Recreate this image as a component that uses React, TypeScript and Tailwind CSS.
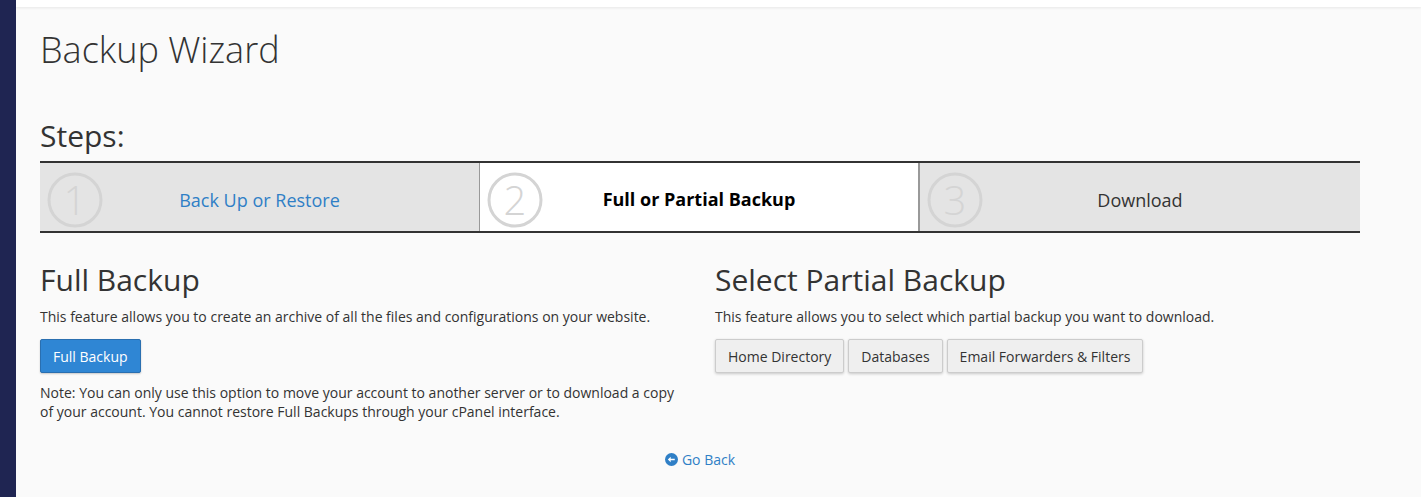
import React from "react";

function Num({ n }: { n: string }) {
  return (
    <svg width="58" height="58" viewBox="0 0 58 58" className="absolute left-[6px] top-[8px]">
      <circle cx="29" cy="29" r="26" fill="none" stroke="#d4d4d4" strokeWidth="3" />
      <text x="29" y="44" textAnchor="middle" fontSize="40" fontWeight="300" fill="#d4d4d4" fontFamily="Open Sans, sans-serif">{n}</text>
    </svg>
  );
}

export default function App() {
  const f = { fontFamily: '"Open Sans", "Liberation Sans", sans-serif' };
  return (
    <div style={f} className="flex h-[497px] w-[1421px] bg-[#fafafa] text-[#333]">
      <div className="w-[16px] shrink-0 bg-[#1f2552]" />
      <div className="flex-1 flex flex-col">
        <div className="h-[7px] bg-white shadow-[0_1px_3px_rgba(0,0,0,0.08)]" />
        <div className="pl-[24px] pr-[61px]">
          <h1 className="mt-[23px] text-[36px] font-light leading-[40px] text-[#333]">Backup Wizard</h1>
          <h2 className="mt-[49px] text-[30px] leading-[34px]">Steps:</h2>
          <div className="mt-[8px] grid grid-cols-3 border-y-2 border-[#333] h-[72px]">
            <div className="relative bg-[#e4e4e4] flex items-center justify-center border-r border-[#999]">
              <Num n="1" />
              <span className="text-[18px] text-[#2f7fc6] pt-[6px]">Back Up or Restore</span>
            </div>
            <div className="relative bg-white flex items-center justify-center border-r-2 border-[#999]">
              <Num n="2" />
              <span className="text-[18px] font-bold text-black pt-[4px]">Full or Partial Backup</span>
            </div>
            <div className="relative bg-[#e4e4e4] flex items-center justify-center">
              <Num n="3" />
              <span className="text-[18px] text-[#333] pt-[6px]">Download</span>
            </div>
          </div>
          <div className="grid grid-cols-[675px_1fr] mt-[30px]">
            <div>
              <h3 className="text-[30px] leading-[34px]">Full Backup</h3>
              <p className="mt-[9px] text-[14px]">This feature allows you to create an archive of all the files and configurations on your website.</p>
              <button className="mt-[12px] h-[34px] px-[12px] text-[14px] text-white bg-[#2f86d4] border border-[#2a6fb0] rounded-[2px] shadow-[0_1px_2px_rgba(0,0,0,0.2)]">Full Backup</button>
              <p className="mt-[10px] text-[14px] leading-[19px] w-[645px]">Note: You can only use this option to move your account to another server or to download a copy of your account. You cannot restore Full Backups through your cPanel interface.</p>
            </div>
            <div>
              <h3 className="text-[30px] leading-[34px]">Select Partial Backup</h3>
              <p className="mt-[9px] text-[14px]">This feature allows you to select which partial backup you want to download.</p>
              <div className="mt-[12px] flex gap-[4px]">
                {["Home Directory", "Databases", "Email Forwarders & Filters"].map((t) => (
                  <button key={t} className="h-[34px] px-[12px] text-[14px] bg-[#efefef] border border-[#ccc] rounded-[2px] shadow-[0_1px_3px_rgba(0,0,0,0.2)]">{t}</button>
                ))}
              </div>
            </div>
          </div>
          <div className="mt-[28px] flex justify-center">
            <a className="flex items-center gap-[4px] text-[14px] text-[#2f7fc6]">
              <svg width="13" height="13" viewBox="0 0 16 16">
                <circle cx="8" cy="8" r="8" fill="#2f7fc6" />
                <path d="M12 7H7V4.5L3.5 8 7 11.5V9h5z" fill="white" />
              </svg>
              Go Back
            </a>
          </div>
        </div>
      </div>
    </div>
  );
}
